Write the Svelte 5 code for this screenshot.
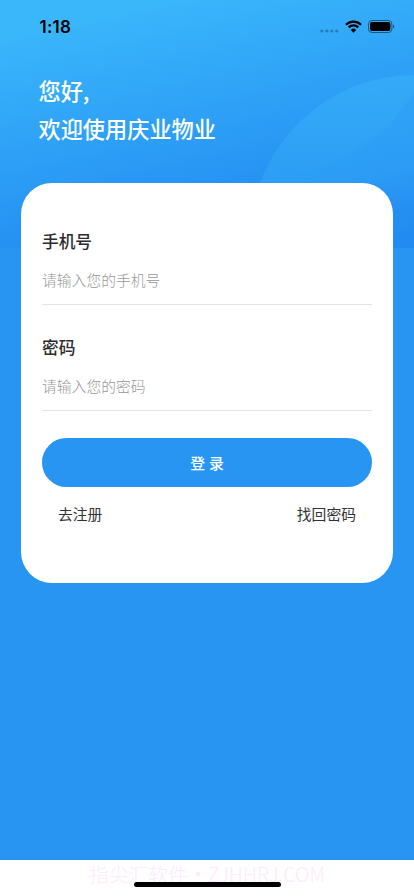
<script lang="ts">
  let phone = $state('')
  let password = $state('')

  function login(event: SubmitEvent) {
    event.preventDefault()
  }
</script>

<div class="screen">
  <svg class="backdrop" viewBox="0 0 414 248" aria-hidden="true">
    <defs>
      <linearGradient id="sky" gradientUnits="userSpaceOnUse" x1="170" y1="0" x2="225" y2="248">
        <stop offset="0" stop-color="#3ab6fb" />
        <stop offset="0.5" stop-color="#2d9ff6" />
        <stop offset="1" stop-color="#2088f0" />
      </linearGradient>
      <linearGradient id="bubble" gradientUnits="userSpaceOnUse" x1="320" y1="75" x2="350" y2="248">
        <stop offset="0" stop-color="#3cb6fa" stop-opacity="0.28" />
        <stop offset="0.6" stop-color="#3cb6fa" stop-opacity="0.32" />
        <stop offset="1" stop-color="#3cb6fa" stop-opacity="0.06" />
      </linearGradient>
      <linearGradient id="leaf" gradientUnits="userSpaceOnUse" x1="380" y1="90" x2="310" y2="185">
        <stop offset="0" stop-color="#40baf8" stop-opacity="0.19" />
        <stop offset="1" stop-color="#40baf8" stop-opacity="0.01" />
      </linearGradient>
    </defs>
    <rect width="414" height="248" fill="url(#sky)" />
    <circle cx="415" cy="240" r="165" fill="url(#bubble)" />
    <path d="M414 75A165 165 0 0 0 260 182C328 172 386 144 414 90Z" fill="url(#leaf)" />
  </svg>

  <header class="status-bar">
    <time>1:18</time>
    <div class="status-icons">
      <svg class="signal" width="19" height="4" viewBox="0 0 19 4" aria-hidden="true">
        <circle cx="1.9" cy="2" r="1.6" />
        <circle cx="6.9" cy="2" r="1.6" />
        <circle cx="11.8" cy="2" r="1.6" />
        <circle cx="16.7" cy="2" r="1.6" />
      </svg>
      <svg width="17" height="13" viewBox="0 0 17 13" aria-hidden="true">
        <path d="M1 4.7a10.7 10.7 0 0 1 15 0M3.7 7.4a6.9 6.9 0 0 1 9.6 0" fill="none" stroke="#000" stroke-width="2.2" />
        <path d="M5.8 9.9a3.9 3.9 0 0 1 5.4 0L8.5 12.7Z" />
      </svg>
      <svg width="27" height="13" viewBox="0 0 27 13" aria-hidden="true">
        <rect x="0.5" y="0.5" width="23.4" height="12" rx="3.5" fill="none" stroke="#000" stroke-opacity="0.48" />
        <rect x="2" y="2" width="20.4" height="9" rx="2" />
        <path d="M25 4.8c1.7.5 1.7 2.9 0 3.4Z" fill-opacity="0.55" />
      </svg>
    </div>
  </header>

  <h1>您好,<br />欢迎使用庆业物业</h1>

  <form class="card" onsubmit={login}>
    <label class="field">
      <span>手机号</span>
      <input type="tel" placeholder="请输入您的手机号" bind:value={phone} />
    </label>
    <label class="field">
      <span>密码</span>
      <input type="password" placeholder="请输入您的密码" bind:value={password} />
    </label>
    <button type="submit" class="login">登 录</button>
    <div class="links">
      <button type="button">去注册</button>
      <button type="button">找回密码</button>
    </div>
  </form>

  <footer>
    <span>指尖汇软件・ZJHHRJ.COM</span>
    <div class="home-indicator"></div>
  </footer>
</div>

<style>
  :global(body) {
    margin: 0;
  }

  .screen {
    position: relative;
    display: flex;
    flex-direction: column;
    box-sizing: border-box;
    width: 414px;
    height: 896px;
    overflow: hidden;
    background: #2895f3;
    font-family: 'Noto Sans CJK SC', sans-serif;
  }

  .backdrop {
    position: absolute;
    top: 0;
    left: 0;
    width: 414px;
    height: 248px;
  }

  .status-bar,
  h1,
  .card,
  footer {
    position: relative;
  }

  .status-bar {
    display: flex;
    align-items: center;
    justify-content: space-between;
    height: 53px;
    padding: 0 19px 0 39.5px;
  }

  time {
    font: 600 17px/20px Inter, sans-serif;
    letter-spacing: 0.2px;
  }

  .status-icons {
    display: flex;
    align-items: center;
    gap: 6px;
  }

  .status-icons svg {
    display: block;
  }

  .status-icons .signal {
    margin-top: 9px;
    fill: #000;
    fill-opacity: 0.27;
  }

  h1 {
    margin: 18px 0 0 38.5px;
    color: #fff;
    font-size: 22.2px;
    font-weight: 500;
    line-height: 38px;
  }

  .card {
    display: flex;
    flex-direction: column;
    box-sizing: border-box;
    width: 372px;
    height: 400px;
    margin: 35.6px 0 0 21px;
    border-radius: 31px;
    padding: 45px 21px 0;
    background: #fff;
  }

  .field {
    display: flex;
    flex-direction: column;
    box-sizing: border-box;
    height: 77px;
    margin-bottom: 29px;
    border-bottom: 1px solid #e4e4e4;
  }

  .field span {
    color: #2c2c2e;
    font-size: 16.7px;
    font-weight: 500;
    line-height: 26px;
  }

  input {
    height: 30px;
    margin-top: 11px;
    border: 0;
    padding: 0;
    outline: 0;
    background: transparent;
    color: #333;
    font: 300 14.8px/30px 'Noto Sans CJK SC', sans-serif;
  }

  input::placeholder {
    color: #999;
    opacity: 1;
  }

  button {
    border: 0;
    padding: 0;
    background: none;
    font-family: inherit;
  }

  .login {
    flex-shrink: 0;
    height: 49px;
    margin-top: -2px;
    border-radius: 25px;
    background: #2895f3;
    color: #fff;
    font-size: 14.8px;
    font-weight: 500;
    word-spacing: 0.6px;
  }

  .links {
    display: flex;
    justify-content: space-between;
    margin-top: 15px;
    padding: 0 16px;
  }

  .links button {
    color: #333;
    font-size: 14.8px;
    line-height: 24px;
  }

  footer {
    display: flex;
    flex-direction: column;
    align-items: center;
    height: 36.5px;
    margin-top: auto;
    background: #fff;
  }

  footer span {
    color: #fdeafb;
    font-size: 19.8px;
    font-weight: 300;
    line-height: 28px;
    white-space: nowrap;
  }

  .home-indicator {
    position: absolute;
    bottom: 9px;
    width: 147px;
    height: 5.5px;
    border-radius: 3px;
    background: #000;
  }
</style>
